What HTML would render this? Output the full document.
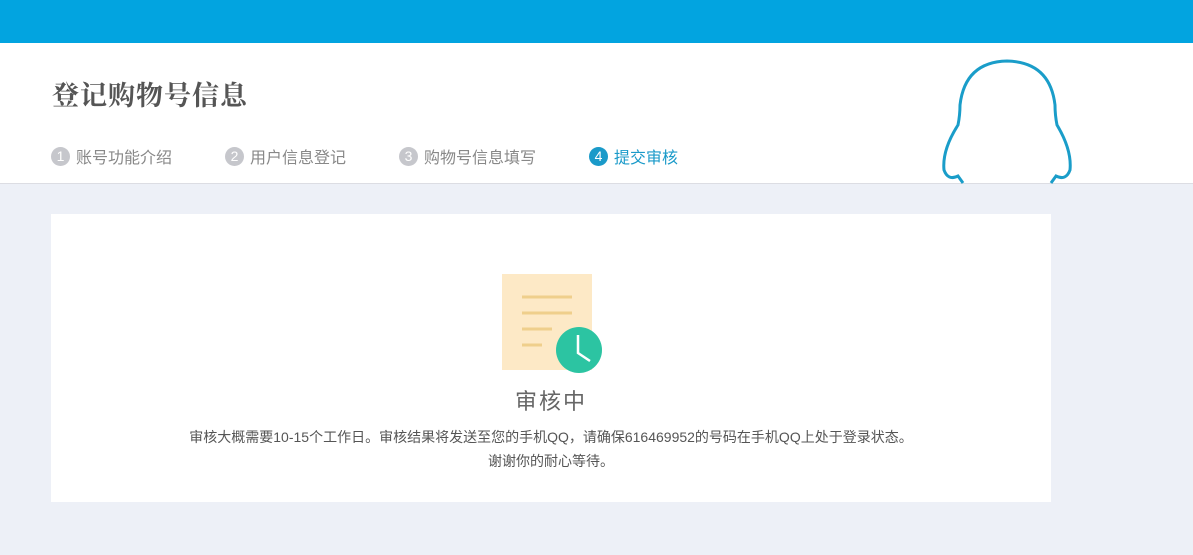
<!DOCTYPE html>
<html><head><meta charset="utf-8"><style>
body{margin:0;width:1193px;height:555px;background:#edf0f7;font-family:"Liberation Sans","Noto Sans CJK SC",sans-serif;position:relative;overflow:hidden}
.top{position:absolute;left:0;top:0;width:1193px;height:43px;background:#02a4e0}
.hd{position:absolute;left:0;top:43px;width:1193px;height:140px;background:#fff;border-bottom:1px solid #dcdde3}
h1{position:absolute;left:52px;top:74px;margin:0;font-size:27px;font-weight:bold;color:#555;font-family:"Noto Serif CJK SC","Liberation Serif",serif;letter-spacing:1px}
.st{position:absolute;top:144px;font-size:16px;color:#888;display:flex;align-items:center}
.st i{font-style:normal;display:inline-block;width:19px;height:19px;border-radius:50%;background:#c6c7cc;color:#fff;font-size:14px;text-align:center;line-height:19px;margin-right:6px}
.st.on{color:#1a9ac9}.st.on i{background:#1a9ac9}
.card{position:absolute;left:51px;top:214px;width:1000px;height:288px;background:#fff}
.t{position:absolute;left:0;width:1000px;text-align:center}
</style></head><body>
<div class="top"></div>
<div class="hd"></div>
<h1>登记购物号信息</h1>
<div class="st" style="left:51px"><i>1</i>账号功能介绍</div>
<div class="st" style="left:225px"><i>2</i>用户信息登记</div>
<div class="st" style="left:399px"><i>3</i>购物号信息填写</div>
<div class="st on" style="left:589px"><i>4</i>提交审核</div>
<svg style="position:absolute;left:0;top:0" width="1193" height="184">
<path d="M963 183 L958 176 Q948 181 944 170 Q942 150 958 125 Q960 115 960 105 Q965 62 1007 61 Q1050 62 1055 105 Q1055 115 1057 125 Q1072 150 1070 170 Q1066 181 1056 176 L1051 183" fill="#fff" stroke="#1a9dc9" stroke-width="3"/>
</svg>
<div class="card">
<svg style="position:absolute;left:0;top:0" width="1000" height="200">
<rect x="451" y="60" width="90" height="96" fill="#fde9c6"/>
<g stroke="#efcf8c" stroke-width="3"><line x1="471" y1="83" x2="521" y2="83"/><line x1="471" y1="99" x2="521" y2="99"/><line x1="471" y1="115" x2="501" y2="115"/><line x1="471" y1="131" x2="491" y2="131"/></g>
<circle cx="528" cy="136" r="23" fill="#2cc4a2"/>
<path d="M527 121 L527 139 L539 147" stroke="#fff" stroke-width="2.5" fill="none"/>
</svg>
<div class="t" style="top:170px;font-size:22px;color:#666;letter-spacing:2px">审核中</div>
<div class="t" style="top:213px;font-size:14px;color:#555">审核大概需要10-15个工作日。审核结果将发送至您的手机QQ，请确保616469952的号码在手机QQ上处于登录状态。</div>
<div class="t" style="top:237px;font-size:14px;color:#555">谢谢你的耐心等待。</div>
</div>
</body></html>
